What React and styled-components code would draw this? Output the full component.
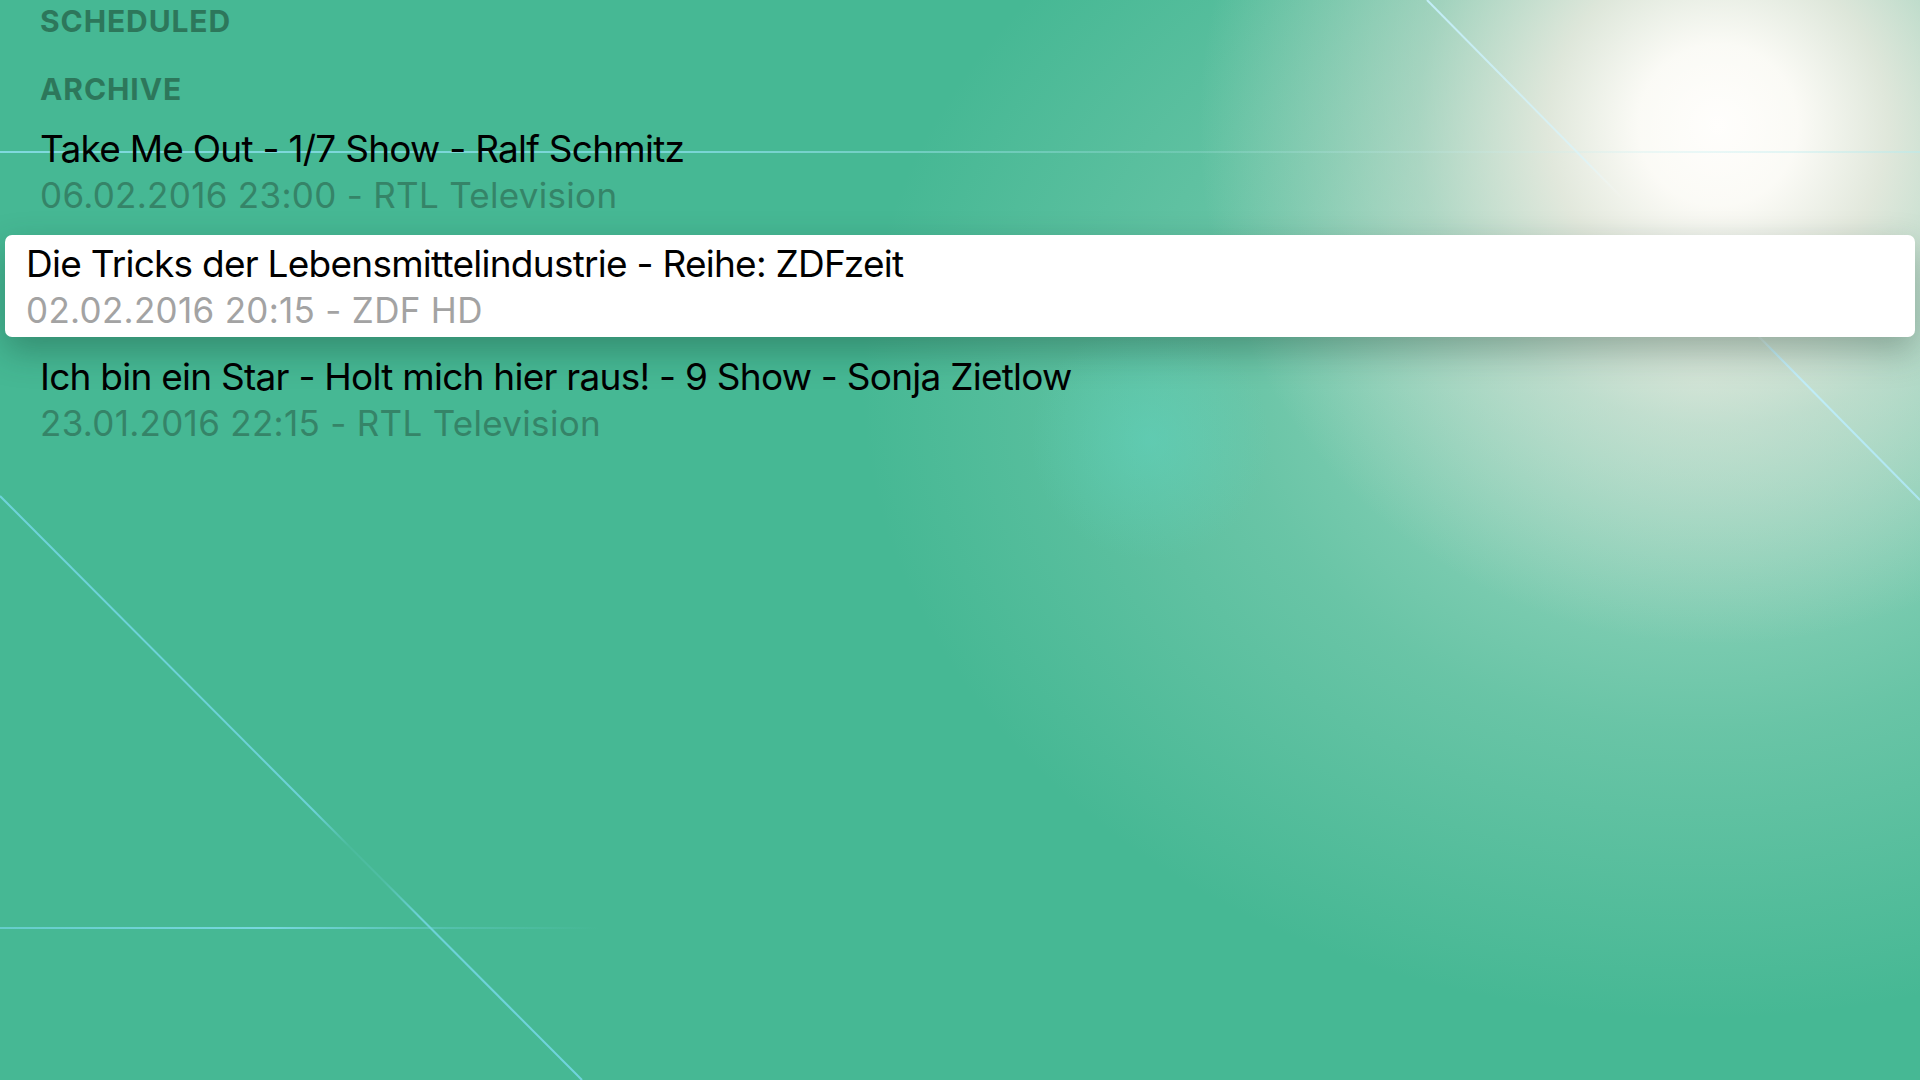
import React from 'react';
import styled, { createGlobalStyle } from 'styled-components';

const GlobalStyle = createGlobalStyle`
  html, body {
    margin: 0;
    padding: 0;
    background: #46b894;
    overflow: hidden;
  }
  #root {
    height: 100vh;
  }
`;

const Screen = styled.div`
  position: relative;
  width: 1920px;
  height: 1080px;
  overflow: hidden;
  font-family: Inter, "Noto Sans", sans-serif;
  background:
    radial-gradient(circle at 1718px 125px, #fffefc 0, rgba(255, 252, 248, 0.97) 80px, rgba(244, 237, 228, 0.84) 170px, rgba(228, 228, 218, 0.5) 300px, rgba(205, 228, 215, 0) 520px),
    radial-gradient(circle at 1150px 440px, rgba(96, 212, 192, 0.5) 0, rgba(96, 212, 192, 0) 120px),
    radial-gradient(ellipse 840px 640px at 1700px 380px, rgba(205, 234, 220, 0.72) 0, rgba(170, 220, 200, 0.35) 55%, rgba(70, 184, 148, 0) 100%),
    #46b894;
`;

const Backdrop = styled.svg`
  position: absolute;
  inset: 0;
  width: 1920px;
  height: 1080px;
  pointer-events: none;
`;

const Content = styled.div`
  position: relative;
  display: flex;
  flex-direction: column;
`;

const SectionHeader = styled.div`
  height: 42px;
  line-height: 42px;
  padding-left: 40px;
  margin-bottom: ${(p) => p.$gap}px;
  font-size: 30px;
  font-weight: 700;
  letter-spacing: 0.9px;
  color: #2d775b;
`;

const Row = styled.div`
  display: flex;
  flex-direction: column;
  box-sizing: border-box;
  height: ${(p) => (p.$focused ? 102 : 114)}px;
  margin: ${(p) => (p.$focused ? '7px 5px 5px' : '0')};
  padding: ${(p) => (p.$focused ? '7px 0 0 21px' : '13px 0 0 40px')};
  background: ${(p) => (p.$focused ? '#ffffff' : 'transparent')};
  border-radius: ${(p) => (p.$focused ? '7px' : '0')};
  box-shadow: ${(p) => (p.$focused ? '0 14px 34px rgba(20, 60, 45, 0.35)' : 'none')};
`;

const Title = styled.div`
  font-size: 37px;
  line-height: 44px;
  letter-spacing: -0.75px;
  color: #000;
  white-space: nowrap;
`;

const Subtitle = styled.div`
  margin-top: 2px;
  font-size: 35px;
  line-height: 44px;
  letter-spacing: 0.3px;
  color: ${(p) => (p.$focused ? '#a3a3a3' : '#358468')};
  white-space: nowrap;
`;

const recordings = [
  { title: 'Take Me Out - 1/7 Show - Ralf Schmitz', info: '06.02.2016 23:00 - RTL Television' },
  { title: 'Die Tricks der Lebensmittelindustrie - Reihe: ZDFzeit', info: '02.02.2016 20:15 - ZDF HD', focused: true },
  { title: 'Ich bin ein Star - Holt mich hier raus! - 9 Show - Sonja Zietlow', info: '23.01.2016 22:15 - RTL Television' },
];

function Lines() {
  return (
    <Backdrop viewBox="0 0 1920 1080">
      <defs>
        <linearGradient id="topH" x1="0" y1="0" x2="1920" y2="0" gradientUnits="userSpaceOnUse">
          <stop offset="0" stopColor="#86dde6" stopOpacity="0.9" />
          <stop offset="0.36" stopColor="#86dde6" stopOpacity="0.8" />
          <stop offset="0.6" stopColor="#a8e6ea" stopOpacity="0.25" />
          <stop offset="0.8" stopColor="#c8eef0" stopOpacity="0.2" />
          <stop offset="1" stopColor="#b8ecef" stopOpacity="0.5" />
        </linearGradient>
        <linearGradient id="topD" x1="1427" y1="0" x2="1920" y2="500" gradientUnits="userSpaceOnUse">
          <stop offset="0" stopColor="#c6f1ff" stopOpacity="0.9" />
          <stop offset="0.32" stopColor="#d8f6ff" stopOpacity="0.6" />
          <stop offset="0.4" stopColor="#ffffff" stopOpacity="0" />
          <stop offset="0.66" stopColor="#ffffff" stopOpacity="0" />
          <stop offset="0.7" stopColor="#c6f1ff" stopOpacity="0.9" />
          <stop offset="1" stopColor="#aee8f6" stopOpacity="0.9" />
        </linearGradient>
        <linearGradient id="lowD" x1="0" y1="496" x2="582" y2="1080" gradientUnits="userSpaceOnUse">
          <stop offset="0" stopColor="#73d6e2" stopOpacity="0.9" />
          <stop offset="0.54" stopColor="#73d6e2" stopOpacity="0.85" />
          <stop offset="0.6" stopColor="#73d6e2" stopOpacity="0.1" />
          <stop offset="0.66" stopColor="#73d6e2" stopOpacity="0.2" />
          <stop offset="0.72" stopColor="#73d6e2" stopOpacity="0.85" />
          <stop offset="1" stopColor="#73d6e2" stopOpacity="0.95" />
        </linearGradient>
        <linearGradient id="lowH" x1="0" y1="0" x2="600" y2="0" gradientUnits="userSpaceOnUse">
          <stop offset="0" stopColor="#73d6e2" stopOpacity="0.7" />
          <stop offset="0.45" stopColor="#7ddbe6" stopOpacity="0.9" />
          <stop offset="0.75" stopColor="#73d6e2" stopOpacity="0.3" />
          <stop offset="1" stopColor="#73d6e2" stopOpacity="0" />
        </linearGradient>
      </defs>
      <line x1="0" y1="152" x2="1920" y2="152" stroke="url(#topH)" strokeWidth="2" />
      <line x1="1427" y1="0" x2="1920" y2="500" stroke="url(#topD)" strokeWidth="2" />
      <line x1="0" y1="496" x2="582" y2="1080" stroke="url(#lowD)" strokeWidth="2" />
      <line x1="0" y1="928" x2="600" y2="928" stroke="url(#lowH)" strokeWidth="2" />
    </Backdrop>
  );
}

export default function App() {
  return (
    <Screen>
      <GlobalStyle />
      <Lines />
      <Content>
        <SectionHeader $gap={26}>SCHEDULED</SectionHeader>
        <SectionHeader $gap={4}>ARCHIVE</SectionHeader>
        {recordings.map((item, index) => (
          <Row key={index} $focused={item.focused}>
            <Title>{item.title}</Title>
            <Subtitle $focused={item.focused}>{item.info}</Subtitle>
          </Row>
        ))}
      </Content>
    </Screen>
  );
}
